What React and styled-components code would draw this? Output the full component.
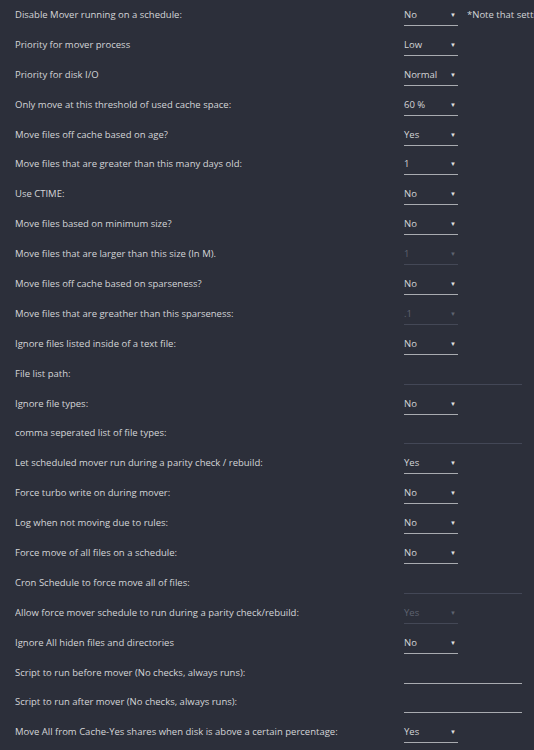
import React from 'react';
import styled, { createGlobalStyle } from 'styled-components';

const GlobalStyle = createGlobalStyle`
  html, body {
    margin: 0;
    padding: 0;
    background: #2c2f3a;
  }
  body {
    font-family: "Open Sans", "Noto Sans", sans-serif;
    color: #d4d5d8;
    overflow: hidden;
  }
`;

const Page = styled.div`
  width: 534px;
  height: 750px;
  background: #2c2f3a;
  overflow: hidden;
`;

const Row = styled.div`
  display: grid;
  grid-template-columns: 389px 1fr;
  align-items: start;
  height: 29.9px;
  padding-left: 15px;
  white-space: nowrap;
`;

const Cell = styled.div`
  font-size: 9.5px;
  line-height: 30px;
  overflow: hidden;
`;

const Control = styled.div`
  display: flex;
  align-items: flex-start;
  gap: 9px;
`;

const Select = styled.div`
  width: 54px;
  height: 26px;
  box-sizing: border-box;
  border-bottom: 1px solid ${(p) => (p.disabled ? '#444856' : '#a9abb0')};
  color: ${(p) => (p.disabled ? '#5f6370' : '#d4d5d8')};
  font-size: 9.5px;
  line-height: 30px;
  display: flex;
  justify-content: space-between;
  align-items: flex-start;
`;

const Arrow = styled.span`
  font-size: 6px;
  line-height: 30px;
  color: ${(p) => (p.disabled ? '#5f6370' : '#e0e0e0')};
  margin-right: 2px;
`;

const TextInput = styled.div`
  width: 118px;
  height: 26px;
  box-sizing: border-box;
  border-bottom: 1px solid ${(p) => (p.bright ? '#a9abb0' : '#434756')};
`;

const rows = [
  { label: 'Disable Mover running on a schedule:', value: 'No', note: '*Note that setting this to Yes disables' },
  { label: 'Priority for mover process', value: 'Low' },
  { label: 'Priority for disk I/O', value: 'Normal' },
  { label: 'Only move at this threshold of used cache space:', value: '60 %' },
  { label: 'Move files off cache based on age?', value: 'Yes' },
  { label: 'Move files that are greater than this many days old:', value: '1' },
  { label: 'Use CTIME:', value: 'No' },
  { label: 'Move files based on minimum size?', value: 'No' },
  { label: 'Move files that are larger than this size (In M).', value: '1', disabled: true },
  { label: 'Move files off cache based on sparseness?', value: 'No' },
  { label: 'Move files that are greather than this sparseness:', value: '.1', disabled: true },
  { label: 'Ignore files listed inside of a text file:', value: 'No' },
  { label: 'File list path:', input: true },
  { label: 'Ignore file types:', value: 'No' },
  { label: 'comma seperated list of file types:', input: true },
  { label: 'Let scheduled mover run during a parity check / rebuild:', value: 'Yes' },
  { label: 'Force turbo write on during mover:', value: 'No' },
  { label: 'Log when not moving due to rules:', value: 'No' },
  { label: 'Force move of all files on a schedule:', value: 'No' },
  { label: 'Cron Schedule to force move all of files:', input: true },
  { label: 'Allow force mover schedule to run during a parity check/rebuild:', value: 'Yes', disabled: true },
  { label: 'Ignore All hiden files and directories', value: 'No' },
  { label: 'Script to run before mover (No checks, always runs):', input: true, bright: true },
  { label: 'Script to run after mover (No checks, always runs):', input: true, bright: true },
  { label: 'Move All from Cache-Yes shares when disk is above a certain percentage:', value: 'Yes' },
];

const App = () => {
  return (
    <Page>
      <GlobalStyle />
      {rows.map((r, i) => (
        <Row key={i}>
          <Cell>{r.label}</Cell>
          <Control>
            {r.input ? (
              <TextInput bright={r.bright} />
            ) : (
              <Select disabled={r.disabled}>
                <span>{r.value}</span>
                <Arrow disabled={r.disabled}>▼</Arrow>
              </Select>
            )}
            {r.note && <Cell>{r.note}</Cell>}
          </Control>
        </Row>
      ))}
    </Page>
  );
};

export default App;
